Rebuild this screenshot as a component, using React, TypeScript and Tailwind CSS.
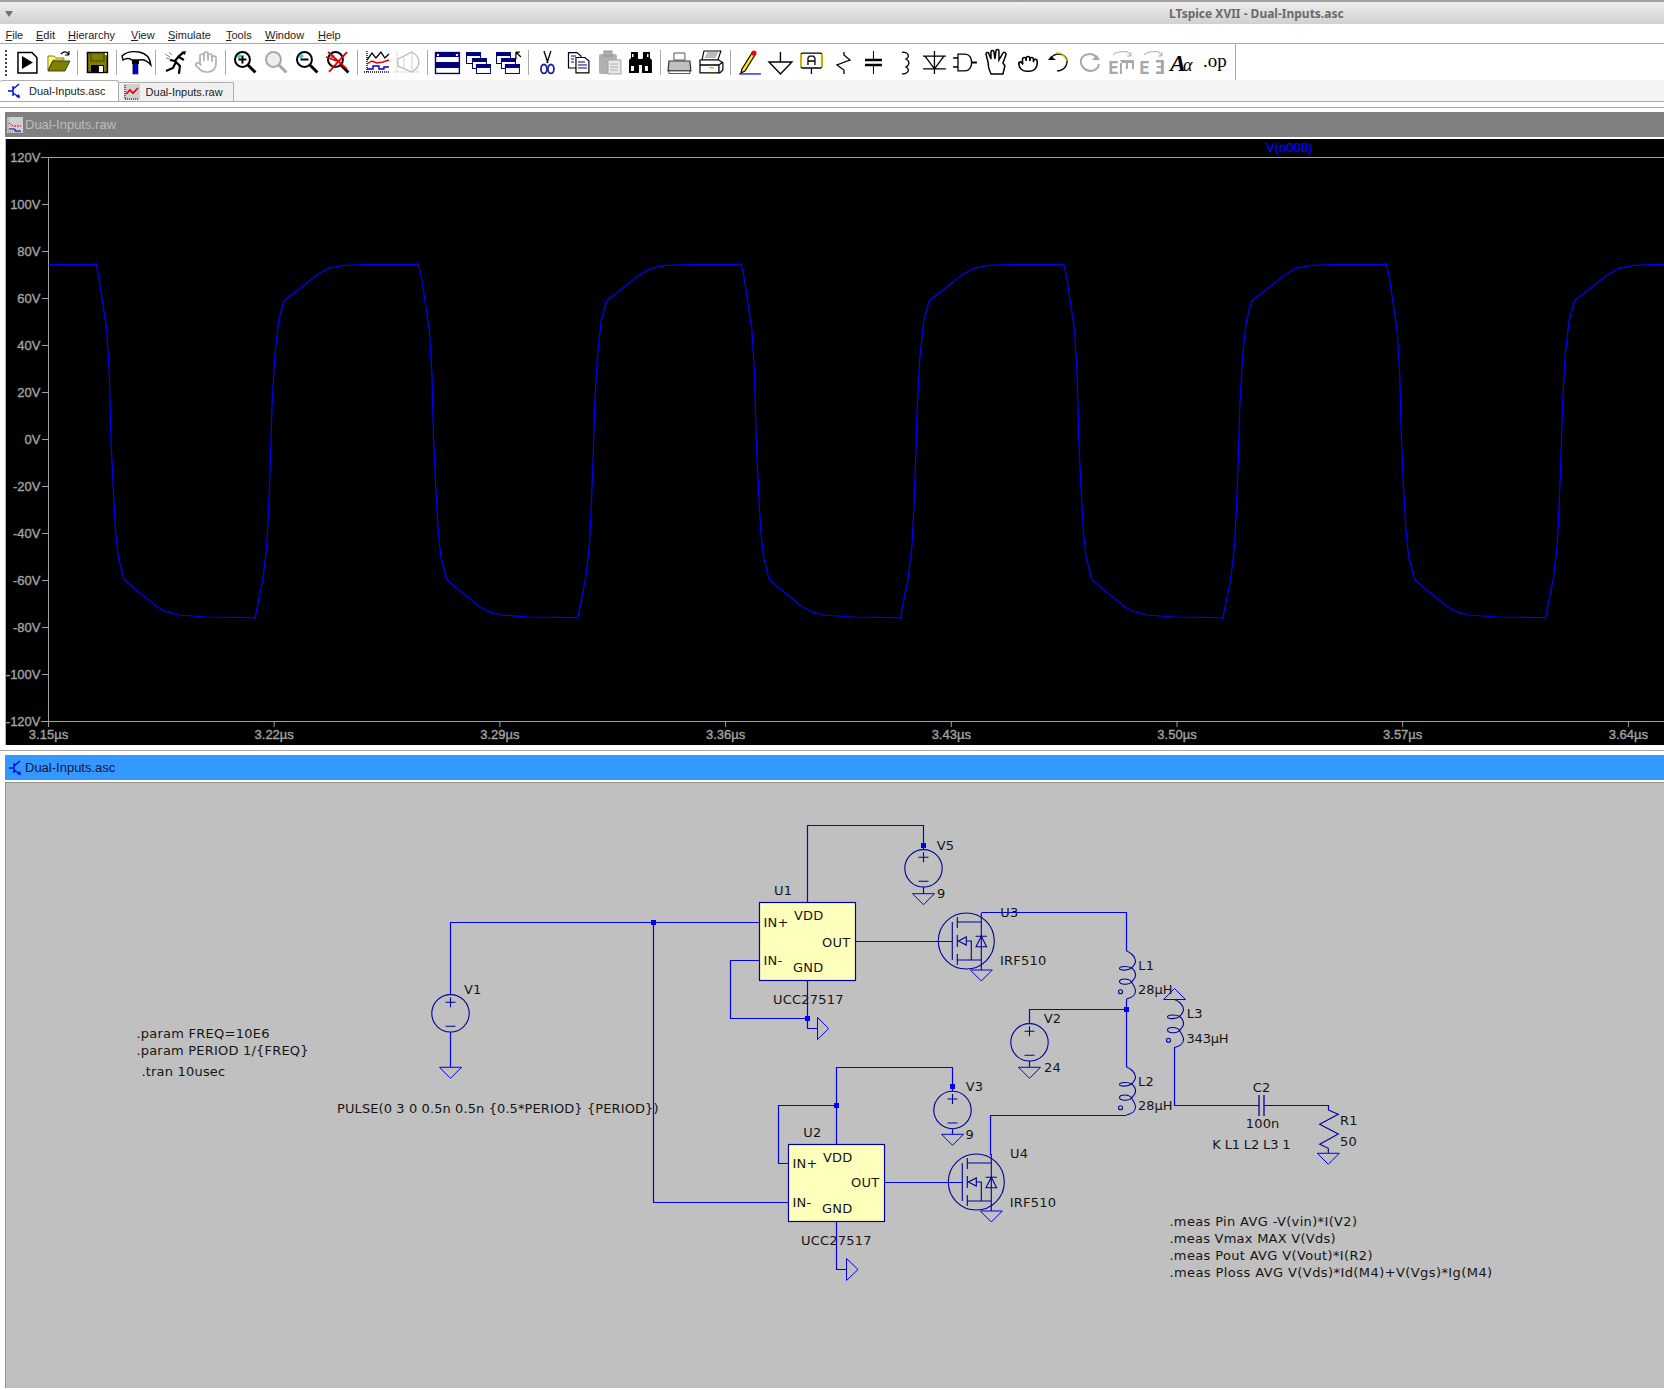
import React from "react";
import { Hand, Grab } from "lucide-react";

const WAVE: [number, number][] = [
  [0, 263.7], [3.3, 280], [7, 305], [10.7, 330], [13.3, 373], [15, 440], [17.3, 490], [19.7, 533], [22.3, 556.7],
  [28, 579.3], [37.3, 587.7], [50.7, 598.3], [60.7, 606.7], [70.7, 611.7], [82.3, 615], [110.7, 617], [158.3, 617.7],
  [159, 618.5], [161.3, 606.7], [166.7, 580], [170.7, 546.7], [172.7, 506.7], [174.7, 453], [176, 406.7], [178.7, 356.7],
  [182.7, 320], [188, 300.7], [204, 288.3], [220.7, 275], [232.3, 268.3], [247.3, 265.3], [280, 264.3], [320.7, 264.3],
];
function wavePoints() {
  const pts: string[] = ["48.7,264.6", "92,264.6"];
  for (let k = 0; k < 6; k++) {
    for (const [x, y] of WAVE) {
      const px = 96 + k * 322.6 + x;
      if (px < 1680) pts.push(`${px.toFixed(1)},${y}`);
    }
  }
  return pts.join(" ");
}

const YT = ["120V", "100V", "80V", "60V", "40V", "20V", "0V", "-20V", "-40V", "-60V", "-80V", "-100V", "-120V"];
const XT = ["3.15µs", "3.22µs", "3.29µs", "3.36µs", "3.43µs", "3.50µs", "3.57µs", "3.64µs"];

function Plot() {
  const labelFont = { fontFamily: "'Liberation Sans', sans-serif", fontSize: 13, fill: "#a4a4a4", stroke: "#a4a4a4", strokeWidth: 0.35 };
  return (
    <svg width="1660" height="606" className="block">
      <g transform="translate(-6,-139)">
        <line x1="41" x2="1664" y1="157.5" y2="157.5" stroke="#a0a0a0" />
        <line x1="41" x2="1664" y1="721.5" y2="721.5" stroke="#a0a0a0" />
        <line x1="48.5" x2="48.5" y1="157" y2="722" stroke="#a0a0a0" />
        {YT.map((t, i) => {
          const y = 157.5 + i * 47;
          return (
            <g key={t}>
              <line x1="42" x2="48" y1={y} y2={y} stroke="#a0a0a0" />
              <text x="40.5" y={y + 4.5} textAnchor="end" {...labelFont}>{t}</text>
            </g>
          );
        })}
        {XT.map((t, i) => {
          const x = 48.5 + i * 225.7;
          return (
            <g key={t}>
              <line x1={x} x2={x} y1="722" y2="727" stroke="#a0a0a0" />
              <text x={x} y="739" textAnchor="middle" {...labelFont}>{t}</text>
            </g>
          );
        })}
        <text x="1266" y="152" fontFamily="'Liberation Sans', sans-serif" fontSize="13" fill="#0000ff" stroke="#0000ff" strokeWidth="0.35">V(n008)</text>
        <polyline points={wavePoints()} fill="none" stroke="#0000ff" strokeWidth="1.25" />
      </g>
    </svg>
  );
}

const W = "#0000f0";
const S = "#00009c";

function Wire({ d }: { d: string }) {
  return <path d={d} fill="none" stroke={W} strokeWidth="1.2" />;
}
function Dot({ x, y }: { x: number; y: number }) {
  return <rect x={x - 2.5} y={y - 2.5} width="5" height="5" fill={W} />;
}
function Gnd({ x, y }: { x: number; y: number }) {
  return <path d={`M${x - 11} ${y}H${x + 11}L${x} ${y + 11}Z`} fill="none" stroke={W} strokeWidth="1" />;
}
function Source({ x, cy }: { x: number; cy: number }) {
  return (
    <g fill="none" stroke={S} strokeWidth="1.1">
      <circle cx={x} cy={cy} r="18.7" />
      <path d={`M${x - 5} ${cy - 11}H${x + 5}M${x} ${cy - 16}V${cy - 6}M${x - 5} ${cy + 13}H${x + 5}`} />
    </g>
  );
}
function Mosfet({ cx, cy }: { cx: number; cy: number }) {
  return (
    <g transform={`translate(${cx},${cy})`} fill="none" stroke={S} strokeWidth="1.1">
      <circle r="28" />
      <path d="M-14 -19V19M-9 -24V-13M-9 -6V6M-9 13V24M-9 -19H15M-9 19H15M0 0H5V19M15 -28V29" />
      <path d="M-8 0L0 -4V4Z" />
      <path d="M9.3 -4.7H20.6M15 -4.7L9.7 5.7H20.3Z" />
    </g>
  );
}
function Ind({ x, y }: { x: number; y: number }) {
  return (
    <g transform={`translate(${x},${y})`} fill="none" stroke={S} strokeWidth="1.1">
      <path d="M0 0C3 1 9 5 9 10C9 13 7 15 5 17C2 19.5 -7 20 -7 17.5C-7 15 2 15 5 17C8 19 9 22 9 24C9 27 7 29 5 31C3 34 -7 34 -7 30.5C-7 27 3 27 5 31C7 34 9 37 9 40C9 44 5 47 0 48" />
      <circle cx="-6" cy="40.7" r="2" />
    </g>
  );
}
function IC({ x, y, w, h }: { x: number; y: number; w: number; h: number }) {
  return <rect x={x} y={y} width={w} height={h} fill="#ffffbc" stroke={S} strokeWidth="1.2" />;
}

const TEXTS: [string, number, number, number?][] = [
  ["V5", 936.7, 850], ["9", 937, 898], ["U1", 774, 895], ["IN+", 763.5, 927], ["VDD", 794, 920], ["OUT", 822, 947],
  ["IN-", 763.5, 965], ["GND", 793, 972], ["UCC27517", 773, 1004], ["U3", 1000.3, 917], ["IRF510", 1000, 965],
  ["V2", 1043.7, 1023], ["24", 1044, 1072], ["L1", 1138.3, 970], ["28µH", 1138, 994, 0], ["L2", 1138, 1086], ["28µH", 1138, 1110, 0],
  ["L3", 1186.7, 1018], ["343µH", 1186.5, 1043, -0.2], ["C2", 1252.7, 1092], ["100n", 1245.7, 1128], ["K L1 L2 L3 1", 1212.3, 1149, -0.15],
  ["R1", 1340, 1125], ["50", 1340, 1146], ["V3", 965.7, 1091], ["9", 965.5, 1139], ["U2", 803.3, 1137], ["IN+", 792.5, 1168],
  ["VDD", 822.9, 1162], ["OUT", 851, 1187], ["IN-", 792.5, 1207], ["GND", 822, 1213], ["UCC27517", 801, 1245], ["U4", 1010, 1157.5],
  ["IRF510", 1009.8, 1207], ["V1", 464, 994], [".param FREQ=10E6", 136.4, 1037.5, 0.25], [".param PERIOD 1/{FREQ}", 136.4, 1055],
  [".tran 10usec", 141.4, 1076], ["PULSE(0 3 0 0.5n 0.5n {0.5*PERIOD} {PERIOD})", 337, 1112.5, 0.1],
  [".meas Pin AVG -V(vin)*I(V2)", 1169.4, 1225.5, 0.35], [".meas Vmax MAX V(Vds)", 1169.4, 1242.5, 0.25], [".meas Pout AVG V(Vout)*I(R2)", 1169.4, 1259.5, 0.35],
  [".meas Ploss AVG V(Vds)*Id(M4)+V(Vgs)*Ig(M4)", 1169.4, 1276.5, 0.42],
];

function Schematic() {
  return (
    <svg width="1658" height="606" className="block">
      <g transform="translate(-6,-783)">
        <IC x={759.5} y={902.5} w={96} h={78} />
        <IC x={788.5} y={1144.5} w={96} h={77} />
        <Wire d="M807.5 902V825.5H923.5V850" />
        <Wire d="M923.5 887V894" />
        <Dot x={923.5} y={845.5} />
        <Source x={923.5} cy={868.3} />
        <Gnd x={923.5} y={893.7} />
        <Wire d="M450.5 994.5V922.5H759" />
        <Wire d="M450.5 1032V1067" />
        <Source x={450.5} cy={1013.3} />
        <Gnd x={450.5} y={1067.3} />
        <Dot x={653.5} y={922.5} />
        <Wire d="M653.5 922.5V1202.5H788" />
        <Wire d="M759 960.5H730.5V1018.5H807.5" />
        <Wire d="M807.5 981V1028.5H817.5" />
        <Dot x={807.5} y={1018.5} />
        <path d="M817.5 1017.5V1039.5L828.7 1028.5Z" fill="none" stroke={W} />
        <Wire d="M856 941.5H952" />
        <Mosfet cx={966.3} cy={941} />
        <Gnd x={981.3} y={970} />
        <Wire d="M981.5 912.5H1126.5V951" />
        <Ind x={1126.5} y={951} />
        <Wire d="M1126.5 999V1067" />
        <Dot x={1126.5} y={1009.5} />
        <Wire d="M1126.5 1009.5H1029.5V1023.5" />
        <Source x={1029.5} cy={1042.3} />
        <Wire d="M1029.5 1061V1067" />
        <Gnd x={1029.5} y={1067.3} />
        <Ind x={1126.5} y={1067} />
        <Wire d="M1126.5 1115.5H990.5V1155" />
        <Wire d="M836.5 1144V1067.5H952.5V1091" />
        <Dot x={952.5} y={1086.5} />
        <Source x={952.5} cy={1110} />
        <Wire d="M952.5 1129V1134" />
        <Gnd x={952.5} y={1134.3} />
        <Dot x={836.5} y={1105.5} />
        <Wire d="M836.5 1105.5H778.5V1163.5H788" />
        <Wire d="M836.5 1222V1269.5H846.5" />
        <path d="M846.5 1258.5V1280.5L858 1269.5Z" fill="none" stroke={W} />
        <Wire d="M885 1182.5H962" />
        <Mosfet cx={976.3} cy={1182} />
        <Gnd x={991.3} y={1211} />
        <path d="M1163.5 999.5H1185.5L1174.5 988.5Z" fill="none" stroke={W} />
        <Ind x={1174.5} y={999.5} />
        <Wire d="M1174.5 1047V1105.5H1259M1264 1105.5H1328.5V1110" />
        <path d="M1259 1095V1116M1264 1095V1116" fill="none" stroke={S} strokeWidth="1.3" />
        <path d="M1328.3 1110L1338.3 1114.3L1319.7 1124.3L1338.3 1134L1319.7 1144.3L1328.3 1148.3V1153" fill="none" stroke={S} strokeWidth="1.1" />
        <Gnd x={1328.3} y={1153.3} />
        {TEXTS.map(([t, x, y, ls], i) => (
          <text key={i} x={x} y={y} fontFamily="'DejaVu Sans', sans-serif" fontSize="13" letterSpacing={ls ?? 0.2} fill="#151515">{t}</text>
        ))}
      </g>
    </svg>
  );
}

function Ic({ children }: { children: React.ReactNode }) {
  return <svg width="31" height="31" viewBox="0 0 31 31" className="block">{children}</svg>;
}
function Zoom({ children, gray }: { children?: React.ReactNode; gray?: boolean }) {
  const c = gray ? "#a8a8a8" : "#000";
  return (
    <Ic>
      <circle cx="12.5" cy="12.5" r="7.5" fill={gray ? "#eee" : "#fff"} stroke={c} strokeWidth="2" />
      {!gray && <path d="M7 10A7 7 0 0 1 10 7L12 9L9 12Z" fill="#33cccc" />}
      <path d="M18 18L25.5 25.5" stroke={c} strokeWidth="3" />
      {children}
    </Ic>
  );
}
function Win({ x, y, w, h }: { x: number; y: number; w: number; h: number }) {
  return (
    <g>
      <rect x={x + 0.5} y={y + 0.5} width={w} height={h} fill="#fff" stroke="#000080" />
      <rect x={x} y={y} width={w + 1} height="4" fill="#000080" />
    </g>
  );
}
const strokeK = { fill: "none", stroke: "#000", strokeWidth: 1.3 };
const strokeG = { fill: "none", stroke: "#a8a8a8", strokeWidth: 2 };

const ICONS: (React.ReactNode | null)[] = [
  <Ic><path d="M6 5.5H20L25 10.5V26H6Z" fill="#fff" stroke="#000" strokeWidth="1.5" /><path d="M10 9V22L21 15.5Z" /></Ic>,
  <Ic><path d="M5 23V9H11L13 11H21V13H10L5 23Z" fill="#ffff80" stroke="#808000" /><path d="M5 24L10 14H27L22 24Z" fill="#808000" stroke="#404000" /><path d="M18 7C21 4 24 4 26 8M26 8L26 4M26 8L22 8" fill="none" stroke="#000" strokeWidth="1.2" /></Ic>,
  null,
  <Ic><rect x="5.5" y="5.5" width="20" height="20" fill="#808000" stroke="#000" strokeWidth="1.5" /><rect x="9" y="6" width="13" height="8" fill="#808000" stroke="#404000" /><rect x="9" y="18" width="13" height="7" fill="#000" /><rect x="17" y="19" width="4" height="6" fill="#fff" /><rect x="23" y="6" width="2" height="2" fill="#fff" /></Ic>,
  null,
  <Ic><path d="M1 9C5 5 12 4 18 5C24 6 29 10 30 18C26 13 22 12 18 13H11C9 11 5 11 2 13Z" fill="#fff" stroke="#000" strokeWidth="1.4" /><rect x="11" y="13" width="7" height="4" fill="#000" /><rect x="12" y="17" width="5" height="10" fill="#0000c8" stroke="#000040" strokeWidth=".7" /></Ic>,
  null,
  <Ic><path d="M24 5L19 9L15 14L10 13M16 15L13 21L6 24M15 14L20 19L19 27M19 10L24 13" fill="none" stroke="#000" strokeWidth="2.2" /><path d="M21 5L26 4L25 8Z" /><path d="M5 7L10 10M6 11L10 12M9 5L12 8" stroke="#888" strokeWidth="1" /></Ic>,
  <span className="flex h-[31px] w-[31px] items-center justify-center"><Hand size={24} color="#b0b0b0" strokeWidth={1.7} /></span>,
  null,
  <Zoom><path d="M8.5 12.5H16.5M12.5 8.5V16.5" stroke="#000" strokeWidth="2" /></Zoom>,
  <Zoom gray />,
  <Zoom><path d="M8.5 12.5H16.5" stroke="#000" strokeWidth="2" /></Zoom>,
  <Zoom><path d="M5 5L24 22M24 5L6 25M3 10L14 14" stroke="#e00000" strokeWidth="1.8" fill="none" /></Zoom>,
  null,
  <Ic><path d="M5 4V26M2 25H28" stroke="#000" strokeDasharray="1 1" fill="none" strokeWidth="1.4" /><path d="M5 13L10 6L14 11L19 5L23 11L27 7" {...strokeK} /><path d="M5 17L10 14L15 16L21 15L27 13" fill="none" stroke="#e00000" strokeWidth="1.4" /><path d="M5 22H11V19H17V22H22V20H27" fill="none" stroke="#0000c8" strokeWidth="1.4" /></Ic>,
  <Ic><path d="M5 4V26M2 25H28" stroke="#c0c0c0" strokeDasharray="1 1" fill="none" /><path d="M6 12L20 5C25 8 27 12 27 15C27 18 25 22 20 25L6 19Z" fill="none" stroke="#b8b8b8" strokeWidth="1.2" /><path d="M12 9V22M20 5V25" stroke="#d0d0d0" /></Ic>,
  null,
  <Ic><rect x="3.5" y="5.5" width="24" height="21" fill="#fff" stroke="#000080" strokeWidth="1.4" /><rect x="3" y="5" width="25" height="5" fill="#000080" /><rect x="3" y="15" width="25" height="2" fill="#000080" /><rect x="3" y="17" width="25" height="4" fill="#000080" /><rect x="5" y="7" width="2" height="2" fill="#fff" /><rect x="24" y="7" width="2" height="2" fill="#fff" /></Ic>,
  <Ic><Win x={4} y={5} w={14} h={11} /><Win x={10} y={11} w={14} h={10} /><Win x={14} y={17} w={14} h={9} /></Ic>,
  <Ic><Win x={3} y={5} w={14} h={11} /><Win x={8} y={11} w={14} h={10} /><Win x={12} y={17} w={14} h={9} /><path d="M23 12V5M23 5H27M23 5L28 10" stroke="#000" fill="none" strokeWidth="1.3" /></Ic>,
  null,
  <Ic><path d="M12 4L16 16M19 4L15 16" {...strokeK} /><ellipse cx="12" cy="22" rx="3" ry="4.5" fill="none" stroke="#2020a0" strokeWidth="1.8" /><ellipse cx="19" cy="22" rx="3" ry="4.5" fill="none" stroke="#2020a0" strokeWidth="1.8" /></Ic>,
  <Ic><path d="M5.5 5.5H14L18 9V21H5.5Z" fill="#fff" stroke="#000" strokeWidth="1.2" /><path d="M13 10.5H22L26 14V26H13Z" fill="#fff" stroke="#000" strokeWidth="1.2" /><path d="M8 9H13M8 12H11M8 15H11M15 15H22M15 18H24M15 21H24" stroke="#000080" /></Ic>,
  <Ic><rect x="5" y="7" width="18" height="20" rx="2" fill="#b0b0b0" /><rect x="10" y="4" width="8" height="5" fill="#b0b0b0" stroke="#909090" /><rect x="14" y="13" width="13" height="14" fill="#e8e8e8" stroke="#a0a0a0" /><path d="M16 17H24M16 20H24M16 23H24" stroke="#b0b0b0" /></Ic>,
  <Ic><path d="M6 5H13V11L14 13V26H4V13L6 11ZM18 5H25V11L27 13V26H17V13L18 11Z" /><rect x="13" y="12" width="5" height="6" /><rect x="7" y="7" width="1.5" height="3" fill="#fff" /><rect x="22" y="7" width="1.5" height="3" fill="#fff" /><rect x="6" y="19" width="3" height="5" fill="#fff" /><rect x="20" y="19" width="3" height="5" fill="#fff" /></Ic>,
  null,
  <Ic><path d="M10 6H21V13H10Z" fill="#fff" stroke="#555" /><path d="M5 14H26L27 24H4Z" fill="#c0c0c0" stroke="#333" strokeWidth="1.2" /><rect x="5" y="24" width="21" height="2.5" fill="#fff" stroke="#333" strokeWidth=".8" /></Ic>,
  <Ic><path d="M9 4H26L23 13H7Z" fill="#fff" stroke="#000" strokeWidth="1.1" /><path d="M12 6H23M11 8H22M10 10H21" stroke="#777" /><path d="M5 13H24L28 16V23L25 26H5Z" fill="#fff" stroke="#000" strokeWidth="1.2" /><path d="M5 18H24V26M24 18L28 15" {...strokeK} /><rect x="14" y="20" width="5" height="1.5" fill="#e0c000" /></Ic>,
  null,
  <Ic><path d="M8 22L7 26L11 24L21 8L18 6Z" fill="#ffee00" stroke="#000" strokeWidth="1.2" /><circle cx="20" cy="6" r="2.6" fill="#f00000" /><path d="M5 27H27" stroke="#0000e0" strokeWidth="1.2" /></Ic>,
  <Ic><path d="M15.5 5V15M4 15H27L15.5 27Z" fill="none" stroke="#000" strokeWidth="1.4" /></Ic>,
  <Ic><rect x="5" y="6" width="21" height="15" rx="1.5" fill="#fff" stroke="#000" strokeWidth="1.3" /><path d="M5 7V20" stroke="#c8b400" strokeWidth="2" /><path d="M26 7V20" stroke="#c8b400" strokeWidth="2" /><path d="M15.5 21V27" stroke="#000" strokeWidth="1.3" /><path d="M12 18V11L13.5 9H17.5L19 11V18M12 14H19" fill="none" stroke="#000" strokeWidth="1.3" /></Ic>,
  <Ic><path d="M17 5V8L23 13L10 18L17 23V27" {...strokeK} /></Ic>,
  <Ic><path d="M15.5 4V13M15.5 18V27" fill="none" stroke="#000" strokeWidth="1" /><path d="M7 13H24M7 18H24" stroke="#000" strokeWidth="2.4" /></Ic>,
  <Ic><path d="M13 5C20 5 21 10 17 12C21 14 21 18 17 20C21 22 20 27 13 27" {...strokeK} /></Ic>,
  <Ic><path d="M15.5 4V27M4 9H27M4 22H27M15.5 22L6 9M15.5 22L25 9" {...strokeK} /></Ic>,
  <Ic><path d="M3 11H8M3 20H8M8 7H15C24 7 24 24 15 24H8Z" {...strokeK} /><path d="M21 15.5H27" stroke="#000" strokeWidth="2" /></Ic>,
  <Ic><path d="M7 15L5 7C5 5 8 5 8 7L10 12L10 5C10 3 13 3 13 5L14 12L15 4C15 2 18 2 18 4L18 13L22 6C23 4 26 6 25 8L22 16L24 19L22 27H10C8 23 7 19 7 15Z" fill="#fff" stroke="#000" strokeWidth="1.5" /></Ic>,
  <span className="flex h-[31px] w-[31px] items-center justify-center"><Grab size={22} color="#000" strokeWidth={1.7} /></span>,
  <Ic><path d="M8 11C12 5 22 6 24 13C25 19 20 24 14 24" {...strokeK} /><path d="M5 13H13L8 9Z" fill="#000" /><path d="M13 6C18 5 23 9 24 14" fill="none" stroke="#c8b400" strokeWidth="1.2" /></Ic>,
  <Ic><path d="M23 11C19 5 9 6 7 13C6 19 11 24 17 24C22 24 25 20 25 17" {...strokeG} /><path d="M26 13H18L23 8Z" fill="#a8a8a8" /></Ic>,
  <Ic><path d="M8 8C10 5 18 4 23 5L26 9M26 5V9H22" fill="none" stroke="#a8a8a8" /><text x="3" y="27" fontFamily="'DejaVu Sans Mono', monospace" fontWeight="700" fontSize="18" fill="#a8a8a8">E</text><path d="M15 13H29V16H15ZM15 13V27H17V16ZM21 16V22H23V16ZM27 16V22H29V16Z" fill="#a8a8a8" /></Ic>,
  <Ic><path d="M8 8C10 5 18 4 23 5L26 9M26 5V9H22" fill="none" stroke="#a8a8a8" /><text x="3" y="27" fontFamily="'DejaVu Sans Mono', monospace" fontWeight="700" fontSize="18" fill="#a8a8a8">E</text><path d="M20 13H28V27H20V24.5H25V21H21V19H25V15.5H20Z" fill="#a8a8a8" /></Ic>,
  <Ic><text x="3" y="24" fontFamily="'Liberation Serif', serif" fontStyle="italic" fontWeight="700" fontSize="24" fill="#000">A</text><text x="16" y="24" fontFamily="'Liberation Serif', serif" fontStyle="italic" fontSize="18" fill="#000">α</text></Ic>,
  <Ic><text x="5" y="20" fontFamily="'Liberation Serif', serif" fontSize="19" fill="#000">.op</text></Ic>,
];

const MENU: [string, string, string][] = [
  ["F", "ile", "w-[30.5px]"], ["E", "dit", "w-[32px]"], ["H", "ierarchy", "w-[63px]"], ["V", "iew", "w-[37px]"],
  ["S", "imulate", "w-[58px]"], ["T", "ools", "w-[39px]"], ["W", "indow", "w-[53px]"], ["H", "elp", "w-[40px]"],
];

function TransistorIcon({ size = 16 }: { size?: number }) {
  return (
    <svg width={size} height={size} viewBox="0 0 16 16" className="block shrink-0">
      <path d="M1 8H6M6 3V13M6 6L12 1M6 10L12 14" fill="none" stroke="#0000f0" strokeWidth="1.4" />
      <path d="M9 14L13 15L12 11Z" fill="#0000f0" />
    </svg>
  );
}
function ChartIcon({ faded }: { faded?: boolean }) {
  return (
    <svg width="16" height="16" viewBox="0 0 16 16" className="block shrink-0">
      <rect width="16" height="16" fill="#d0d0d0" />
      <path d="M1 1V15H15" fill="none" stroke={faded ? "#777" : "#000"} strokeDasharray="1 1" />
      {faded ? (
        <>
          <path d="M2 6L6 9H14" fill="none" stroke="#e00000" strokeDasharray="2 1" />
          <path d="M2 12H8V14H14" fill="none" stroke="#0000a0" />
        </>
      ) : (
        <path d="M2 10L6 6L9 9L14 4" fill="none" stroke="#e00000" strokeWidth="1.6" />
      )}
    </svg>
  );
}

export default function App() {
  return (
    <div className="flex h-[1390px] w-[1664px] flex-col overflow-hidden bg-white font-['Liberation_Sans',sans-serif]">
      <div className="flex h-[24px] items-center border-t-2 border-[#a0a0a0] bg-gradient-to-b from-[#eeeeee] to-[#d0d0d0] pt-[2px]">
        <div className="ml-[5px] h-0 w-0 border-x-[4px] border-t-[6px] border-x-transparent border-t-[#707070]" />
        <div className="ml-[1156px] whitespace-nowrap font-['Noto_Sans',sans-serif] text-[12px] font-bold text-[#6a6a6a]">LTspice XVII - Dual-Inputs.asc</div>
      </div>

      <div className="flex h-[20px] items-center border-b border-[#aaaaaa] bg-white pl-[5.5px] pt-[4px] text-[11px] text-[#222222]">
        {MENU.map(([a, b, w], i) => (
          <span key={i} className={w}><u>{a}</u>{b}</span>
        ))}
      </div>

      <div className="flex h-[36px] items-center bg-white pl-[11.75px]">
        <div className="absolute left-[5px] top-[50px] h-[26px] w-[2px] border-l-2 border-dotted border-[#444444]" />
        {ICONS.map((ic, i) =>
          ic === null ? (
            <div key={i} className="flex h-full w-[8.2px] items-center justify-center">
              <div className="h-[25px] w-px bg-[#a8a8a8]" />
            </div>
          ) : (
            <div key={i} className="flex h-full w-[30.9px] items-center justify-center">{ic}</div>
          )
        )}
        <div className="ml-[7px] h-full w-px bg-[#a8a8a8]" />
      </div>

      <div className="flex h-[22px] items-end border-b border-[#aaaaaa] bg-[#f4f4f4] text-[11px] text-[#222222]">
        <div className="flex h-[21px] w-[118.6px] items-center gap-[6px] rounded-t-[3px] border-r border-t border-[#b0b0b0] bg-white pl-[7px]">
          <TransistorIcon />
          <span>Dual-Inputs.asc</span>
        </div>
        <div className="flex h-[19px] w-[115px] items-center gap-[6px] border-r border-t border-[#b0b0b0] bg-[#f0f0f0] pl-[5px]">
          <ChartIcon />
          <span>Dual-Inputs.raw</span>
        </div>
      </div>

      <div className="flex min-h-0 flex-1 flex-col bg-white pt-[5px]">
        <div className="border-t border-[#aaaaaa] pt-[4px] pl-[5px]">
          <div className="flex h-[25px] items-center gap-[2px] bg-[#808080] pl-[2px] text-[13px] text-[#bcbcbc]">
            <ChartIcon faded />
            <span>Dual-Inputs.raw</span>
          </div>
          <div className="mt-[2px] h-[606px] border-l border-[#b0b0b0] bg-black">
            <Plot />
          </div>
        </div>
        <div className="mt-[5px] border-t border-[#aaaaaa] pt-[4px] pl-[5px]">
          <div className="flex h-[25px] items-center gap-[1px] bg-[#3399ff] pl-[3px] text-[13px] text-[#14143c]">
            <TransistorIcon />
            <span>Dual-Inputs.asc</span>
          </div>
          <div className="mt-[2px] h-[606px] border-l border-t border-[#909090] bg-[#c0c0c0]">
            <Schematic />
          </div>
        </div>
      </div>
    </div>
  );
}
